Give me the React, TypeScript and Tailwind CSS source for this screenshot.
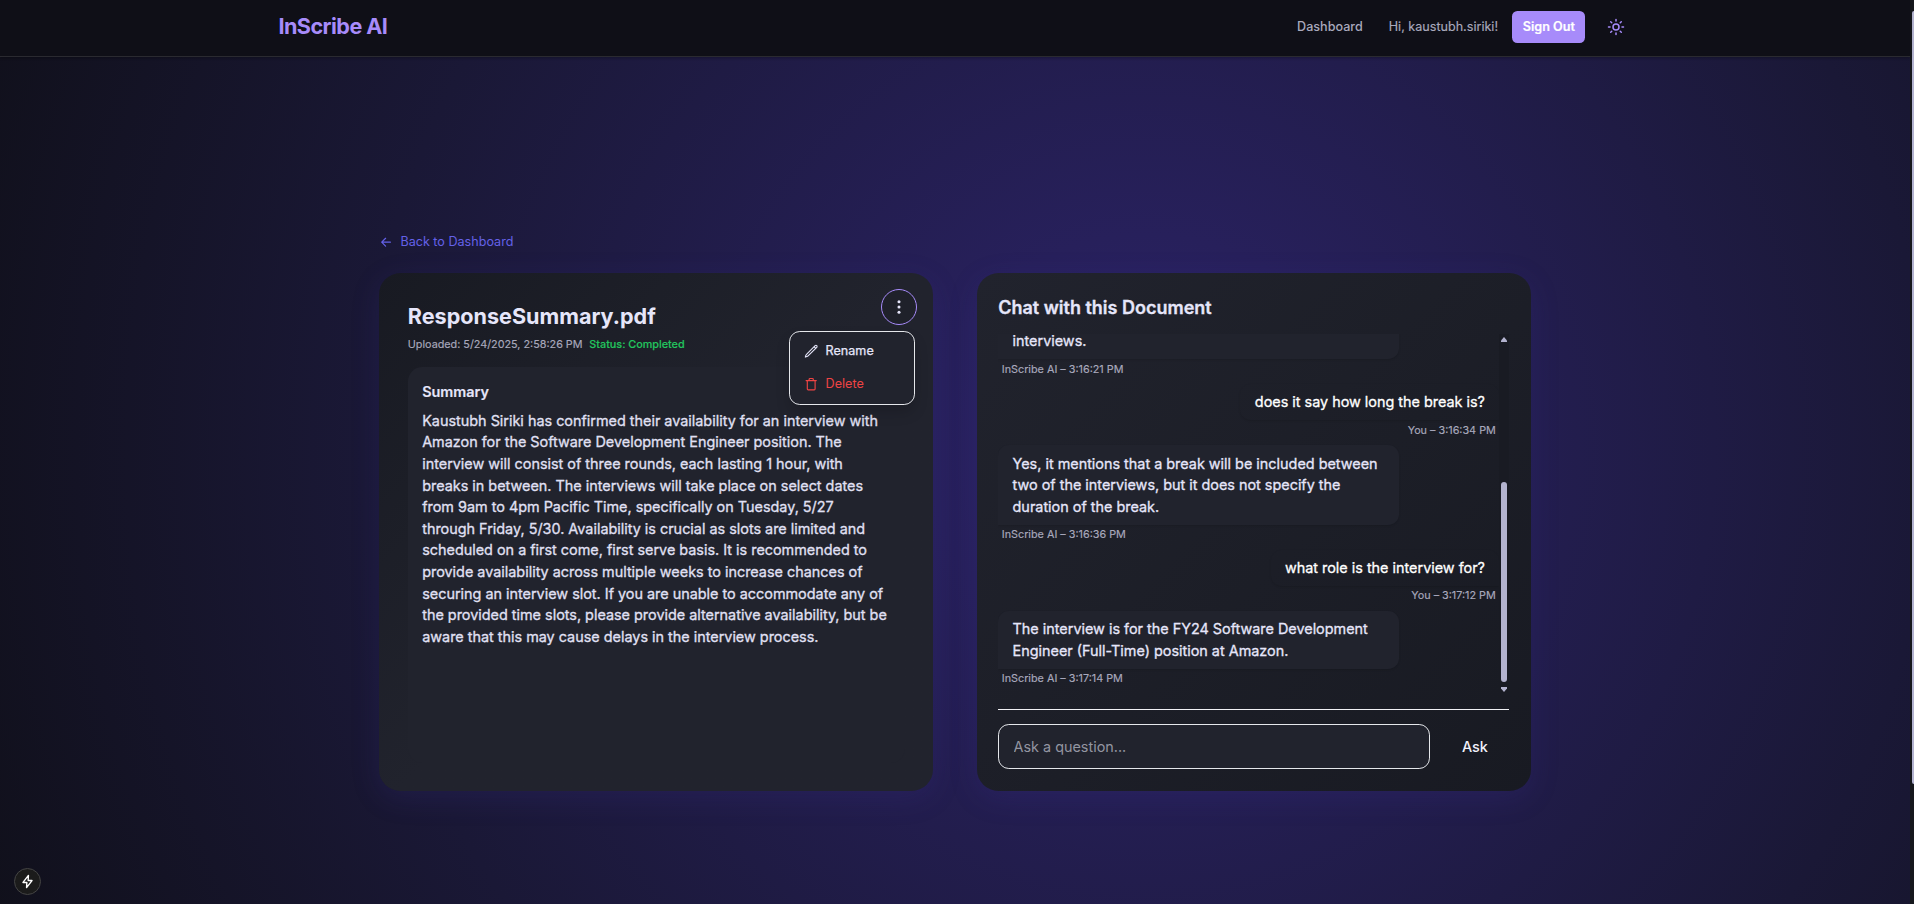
import React from "react";

type Message = { from: "ai" | "you"; text: string; time: string };

const messages: Message[] = [
  { from: "ai", text: "interviews.", time: "3:16:21 PM" },
  { from: "you", text: "does it say how long the break is?", time: "3:16:34 PM" },
  {
    from: "ai",
    text: "Yes, it mentions that a break will be included between two of the interviews, but it does not specify the duration of the break.",
    time: "3:16:36 PM",
  },
  { from: "you", text: "what role is the interview for?", time: "3:17:12 PM" },
  {
    from: "ai",
    text: "The interview is for the FY24 Software Development Engineer (Full-Time) position at Amazon.",
    time: "3:17:14 PM",
  },
];

function SunIcon() {
  return (
    <svg className="size-[18px]" viewBox="0 0 24 24" fill="none" stroke="currentColor" strokeWidth="2" strokeLinecap="round">
      <circle cx="12" cy="12" r="4" />
      <path d="M12 2v2M12 20v2M4.93 4.93l1.41 1.41M17.66 17.66l1.41 1.41M2 12h2M20 12h2M6.34 17.66l-1.41 1.41M19.07 4.93l-1.41 1.41" />
    </svg>
  );
}

function Header() {
  return (
    <header className="h-[57px] shrink-0 border-b border-[#2a2a30] bg-[#0f0f17] shadow-[0_1px_3px_rgba(0,0,0,0.3)]">
      <div className="mx-auto flex h-[54px] w-[1382px] items-center justify-between pr-[20.600px] pl-[14.4px]">
        <span className="pb-[2px] text-[21.6px] font-bold tracking-[-0.54px] text-[#a78bfa]">InScribe AI</span>
        <nav className="flex items-center text-[12.6px] text-[#a9a9bd]">
          <a className="mr-[26px] font-medium">Dashboard</a>
          <span className="mr-[14.4px] [-webkit-text-stroke:0.15px]">Hi, kaustubh.siriki!</span>
          <button className="mr-[22px] flex h-8 w-[73px] items-center justify-center rounded-[5.4px] bg-[#a78bfa] font-semibold text-white [-webkit-text-stroke:0.2px]">
            Sign Out
          </button>
          <span className="text-[#a78bfa]">
            <SunIcon />
          </span>
        </nav>
      </div>
    </header>
  );
}

function ActionsMenu() {
  return (
    <div className="absolute top-4 right-4 flex flex-col items-end">
      <button className="flex size-9 items-center justify-center rounded-full border border-[#a78bfa] bg-[#1f212a] text-[#e6e6fa]">
        <svg className="size-[18px]" viewBox="0 0 20 20" fill="currentColor">
          <circle cx="10" cy="4.2" r="1.7" />
          <circle cx="10" cy="10" r="1.7" />
          <circle cx="10" cy="15.8" r="1.7" />
        </svg>
      </button>
      <div className="mt-[6px] mr-[2px] flex h-[74px] w-[126px] flex-col justify-center rounded-[10.8px] border border-[#e5e7eb] bg-[#21232d] text-[12.6px] shadow-[0_8px_14px_rgba(0,0,0,0.15)]">
        <div className="flex h-[33px] items-center gap-[7px] pl-[13.800px] text-[#e6e6fa] [-webkit-text-stroke:0.25px]">
          <svg className="size-[14.4px]" viewBox="0 0 24 24" fill="none" stroke="currentColor" strokeWidth="1.800" strokeLinecap="round" strokeLinejoin="round">
            <path d="M16.900 4.500l1.700-1.700a1.870 1.870 0 0 1 2.650 2.650L6.800 19.800a4.500 4.500 0 0 1-1.900 1.130L2.200 21.800l.8-2.700a4.500 4.500 0 0 1 1.130-1.900zM16.900 4.500l2.650 2.650" />
          </svg>
          Rename
        </div>
        <div className="flex h-[33px] items-center gap-[7px] pl-[13.800px] text-[#ef4444]">
          <svg className="size-[14.4px]" viewBox="0 0 24 24" fill="none" stroke="currentColor" strokeWidth="1.900" strokeLinecap="round" strokeLinejoin="round">
            <path d="M3.500 6h17M5.500 6v14a1.500 1.500 0 0 0 1.500 1.500h10a1.500 1.500 0 0 0 1.500-1.500V6M8.500 6V4a1.500 1.500 0 0 1 1.500-1.500h4A1.500 1.500 0 0 1 15.500 4v2" />
          </svg>
          Delete
        </div>
      </div>
    </div>
  );
}

function SummaryCard() {
  return (
    <section className="relative flex h-[518.4px] w-[554.4px] flex-col rounded-[21.6px] bg-linear-135 from-[#181a22] to-[#21232d] to-50% p-[28.8px] shadow-[0_7px_29px_rgba(60,48,150,0.2)]">
      <h1 className="text-[21.6px] leading-[28.8px] font-bold text-[#e6e6fa]">ResponseSummary.pdf</h1>
      <p className="mt-[7.2px] text-[10.8px] leading-[14.4px] text-[#a9a9bd] [-webkit-text-stroke:0.15px]">
        Uploaded: 5/24/2025, 2:58:26 PM<span className="ml-[6.8px] font-medium text-[#22c55e]">Status: Completed</span>
      </p>
      <div className="mt-[14.4px] flex-1 rounded-[14.4px] bg-[#21232d] p-[14.4px]">
        <h2 className="text-[14.4px] leading-[21.6px] font-semibold text-[#e6e6fa] [-webkit-text-stroke:0.15px]">Summary</h2>
        <p className="mt-[7.2px] text-[14.4px] leading-[21.6px] text-[#e0e0f4] [-webkit-text-stroke:0.3px]">
          Kaustubh Siriki has confirmed their availability for an interview with Amazon for the Software Development
          Engineer position. The interview will consist of three rounds, each lasting 1 hour, with breaks in between.
          The interviews will take place on select dates from 9am to 4pm Pacific Time, specifically on Tuesday, 5/27
          through Friday, 5/30. Availability is crucial as slots are limited and scheduled on a first come, first serve
          basis. It is recommended to provide availability across multiple weeks to increase chances of securing an
          interview slot. If you are unable to accommodate any of the provided time slots, please provide alternative
          availability, but be aware that this may cause delays in the interview process.
        </p>
      </div>
      <ActionsMenu />
    </section>
  );
}

function MessageRow({ message }: { message: Message }) {
  if (message.from === "you") {
    return (
      <div className="mb-[7.2px] flex shrink-0 flex-col items-end">
        <div className="max-w-[80%] rounded-[10.8px] rounded-br-none px-[14.4px] py-[7.2px] text-[14.4px] leading-[21.6px] text-white shadow-[0_1px_2px_rgba(0,0,0,0.12)] [-webkit-text-stroke:0.3px]">
          {message.text}
        </div>
        <div className="mt-[3.6px] mr-[3.6px] text-[10.8px] leading-[14.4px] text-[#a9a9bd] [-webkit-text-stroke:0.15px]">
          You – {message.time}
        </div>
      </div>
    );
  }
  return (
    <div className="mb-[7.2px] flex shrink-0 flex-col items-start">
      <div className="w-[80%] rounded-[10.8px] rounded-bl-none bg-[#21232d] px-[14.4px] py-[7.2px] text-[14.4px] leading-[21.6px] text-[#e6e6fa] shadow-[0_1px_2px_rgba(0,0,0,0.12)] [-webkit-text-stroke:0.3px]">
        {message.text}
      </div>
      <div className="mt-[3.6px] ml-[3.6px] text-[10.8px] leading-[14.4px] text-[#a9a9bd] [-webkit-text-stroke:0.15px]">
        InScribe AI – {message.time}
      </div>
    </div>
  );
}

function ChatScrollbar() {
  return (
    <div className="flex w-[10px] shrink-0 flex-col items-center bg-[#191b23] text-[#b3b3cf]">
      <svg className="mt-[3px] h-[5px] w-[6px]" viewBox="0 0 6 5" fill="currentColor">
        <path d="M3 0l3 3.500v1.500H0V3.500z" />
      </svg>
      <div className="mt-[140px] h-[200px] w-[6px] rounded-full bg-[#b3b3cf]" />
      <svg className="mt-[5px] h-[5px] w-[6px]" viewBox="0 0 6 5" fill="currentColor">
        <path d="M0 0h6v1.500L3 5 0 1.500z" />
      </svg>
    </div>
  );
}

function ChatCard() {
  return (
    <section className="flex h-[518.4px] w-[554.4px] flex-col rounded-[21.6px] bg-linear-135 from-[#21232d] to-[#181a22] p-[21.6px] shadow-[0_7px_29px_rgba(60,48,150,0.2)]">
      <h2 className="text-[18px] leading-[25.2px] font-semibold text-[#e6e6fa] [-webkit-text-stroke:0.3px]">Chat with this Document</h2>
      <div className="mt-[14.4px] flex h-[360px]">
        <div className="flex flex-1 flex-col justify-end overflow-hidden pb-[0.5px]">
          {messages.map((m) => (
            <MessageRow key={m.time} message={m} />
          ))}
        </div>
        <ChatScrollbar />
      </div>
      <form className="mt-[14.4px] flex gap-[10px] border-t border-[#f1f1f5] pt-[14.4px]">
        <input
          className="h-[45.2px] flex-1 rounded-[10.8px] border border-[#e5e7eb] bg-[#21232d] px-[14.4px] text-[14.4px] text-[#e6e6fa] outline-none placeholder:text-[#9395a1]"
          placeholder="Ask a question..."
        />
        <button type="button" className="w-[69px] text-[14.4px] font-medium text-[#f1f1fb]">
          Ask
        </button>
      </form>
    </section>
  );
}

export default function App() {
  return (
    <div className="flex h-[904px] w-full overflow-hidden bg-[#16181d] font-['Inter',sans-serif]">
      <div className="relative flex w-[1910px] shrink-0 flex-col bg-[radial-gradient(circle_1305px_at_60%_450px,#2c2369_0%,#1a1836_60%,#0f0f17_100%)]">
        <Header />
        <main className="mx-auto w-[1152px] pt-[175px]">
          <a className="flex h-5 items-center gap-[7px] text-[12.6px] text-[#6461e8]">
            <svg className="size-[14.4px]" viewBox="0 0 24 24" fill="none" stroke="currentColor" strokeWidth="2" strokeLinecap="round" strokeLinejoin="round">
              <path d="M19 12H4.500M11 5.500L4.500 12l6.500 6.500" />
            </svg>
            Back to Dashboard
          </a>
          <div className="mt-[21px] flex gap-[43.2px]">
            <SummaryCard />
            <ChatCard />
          </div>
        </main>
        <div className="absolute bottom-[9px] left-[14px] flex size-[27px] items-center justify-center rounded-full border border-[#444] bg-[#1b1b1b] text-white">
          <svg className="size-[15px]" viewBox="0 0 16 16" fill="none" stroke="currentColor" strokeWidth="1.500" strokeLinejoin="round">
            <path d="M9 1.500L3.200 9H7.300L7 14.500L12.800 7H8.700z" />
          </svg>
        </div>
      </div>
      <div className="flex flex-1 flex-col pt-[11px] pl-[2px]">
        <div className="h-[773px] rounded-l-[2px] bg-[#b3b3cf]" />
      </div>
    </div>
  );
}
